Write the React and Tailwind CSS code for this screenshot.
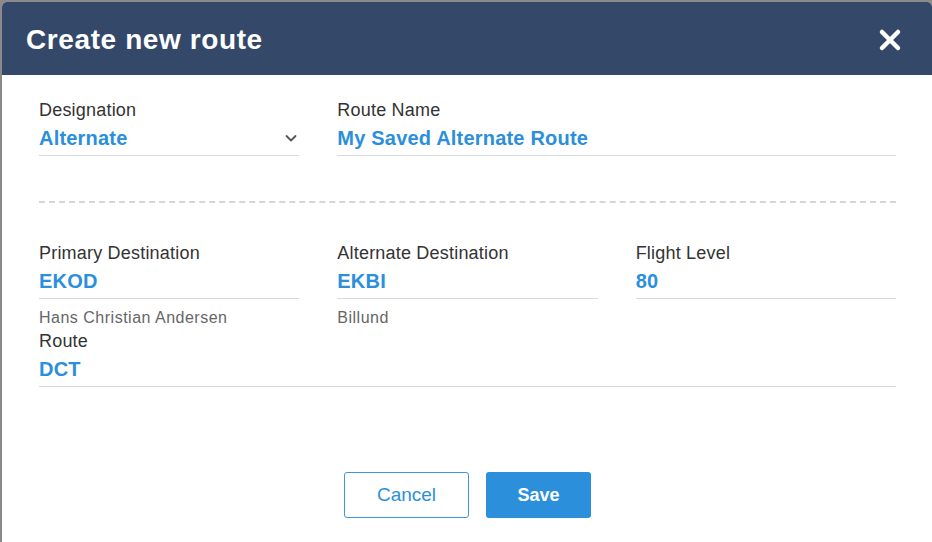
import React from "react";

const Field = ({ label, value, sub, chevron, className = "" }) => (
  <div className={className}>
    <div className="text-[18px] leading-[20px] tracking-[0.2px] text-[#333]">{label}</div>
    <div className="mt-[6px] flex items-center justify-between border-b border-[#d9d9de] pb-[5px]">
      <span className="text-[20px] font-bold leading-[24px] tracking-[0.2px] text-[#2b8fdc]">{value}</span>
      {chevron && (
        <svg width="14" height="14" viewBox="0 0 14 14" className="mr-[1px]">
          <path d="M2.5 5 L7 9.5 L11.5 5" fill="none" stroke="#555" strokeWidth="1.8" strokeLinecap="round" strokeLinejoin="round" />
        </svg>
      )}
    </div>
    {sub && <div className="mt-[10px] text-[16px] leading-[18px] tracking-[0.5px] text-[#666]">{sub}</div>}
  </div>
);

export default function App() {
  return (
    <div className="h-[542px] w-full overflow-hidden bg-[#8a8a8a] pl-[2px] pt-[2px] font-['Liberation_Sans',Arial,sans-serif]">
      <div className="h-[540px] w-[930px] overflow-hidden rounded-tl-[5px] rounded-tr-[5px] bg-white">
        <div className="flex h-[73px] items-center justify-between bg-[#34486a] pl-[24px] pr-[30px]">
          <h1 className="mt-[3px] text-[28px] font-bold tracking-[0.6px] text-white">Create new route</h1>
          <svg width="24" height="24" viewBox="0 0 24 24" className="mt-[3px]">
            <path d="M4 4 L20 20 M20 4 L4 20" stroke="white" strokeWidth="4.5" strokeLinecap="round" />
          </svg>
        </div>

        <div className="pl-[37px] pr-[36px] pt-[25px]">
          <div className="grid grid-cols-3 gap-x-[38px]">
            <Field label="Designation" value="Alternate" chevron />
            <Field label="Route Name" value="My Saved Alternate Route" className="col-span-2" />
          </div>

          <div className="mt-[45px] border-t-2 border-dashed border-[#d6d6d8]" />

          <div className="mt-[40px] grid grid-cols-3 gap-x-[38px]">
            <Field label="Primary Destination" value="EKOD" sub="Hans Christian Andersen" />
            <Field label="Alternate Destination" value="EKBI" sub="Billund" />
            <Field label="Flight Level" value="80" />
          </div>

          <Field label="Route" value="DCT" className="mt-[4px]" />

          <div className="mt-[85px] flex justify-center gap-[17px]">
            <button className="h-[46px] w-[125px] rounded-[3px] border border-[#3a97e0] bg-white text-[19px] text-[#2b8fdc]">
              Cancel
            </button>
            <button className="h-[46px] w-[105px] rounded-[3px] bg-[#2b8fdc] text-[18px] font-bold text-white">
              Save
            </button>
          </div>
        </div>
      </div>
    </div>
  );
}
